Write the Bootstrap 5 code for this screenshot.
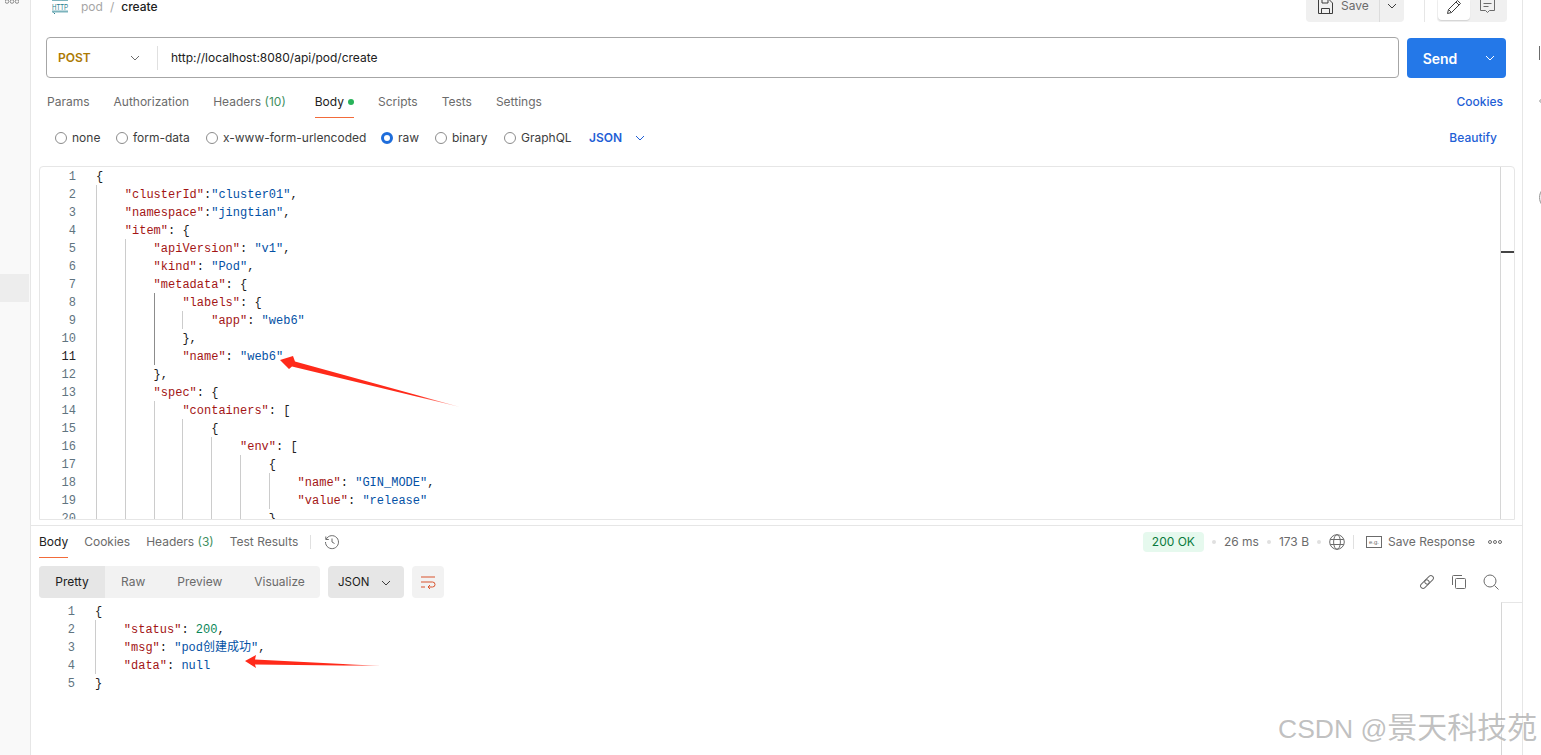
<!DOCTYPE html>
<html lang="en">
<head>
<meta charset="utf-8">
<title>pod / create</title>
<link href="https://cdn.jsdelivr.net/npm/bootstrap@5.3.0/dist/css/bootstrap.min.css" rel="stylesheet">
<style>
html,body{height:755px;overflow:hidden;background:#fff}
body{font-family:Inter,"Noto Sans",sans-serif;font-size:12px;color:#212121;position:relative}
svg{display:block;flex:none}
.ico{fill:none;stroke:#6b6b6b;stroke-width:1}
.sidebar-rail{width:31px;height:755px;background:#f9f9f9;border-right:1px solid #e6e6e6;flex:none}
.side-dots{height:4px;padding-left:5px;margin-bottom:270px;overflow:hidden}
.side-sel{height:28px;background:#ededed;margin-right:1px}
.main-col{width:1492px;height:755px;border-right:1px solid #e6e6e6;flex:none}
.right-rail{padding-left:16px;flex:1;overflow:hidden}
.pad-x{padding-left:15px;padding-right:15px}
.top-strip{height:22px;overflow:hidden}
.http-ico{margin-left:6px}
.crumb-a{color:#a6a6a6;font-size:12px;margin-left:12px;line-height:13px;align-self:flex-start}
.crumb-s{color:#a6a6a6;font-size:12px;margin:0 7px;line-height:13px;align-self:flex-start}
.crumb-b{color:#212121;font-size:12px;font-weight:500;line-height:13px;align-self:flex-start}
.save-grp{width:98px;height:22px;background:#f0f0f0;border-radius:0 0 4px 4px;color:#6b6b6b}
.save-main{width:74px;padding:0 0 10px 12px;gap:8px;border-right:1px solid #dcdcdc;height:22px;line-height:12px}
.save-arrow{flex:1;padding-bottom:10px;height:22px}
.top-div{width:1px;height:22px;background:#e6e6e6;margin:0 12px 0 20px}
.mode-grp{width:70px;height:22px;background:#f0f0f0;border-radius:0 0 4px 4px}
.mode-on{width:32px;height:20px;background:#fff;margin-left:1px;border-radius:0 0 4px 4px;padding-bottom:7px;box-shadow:0 1px 1px rgba(0,0,0,.12)}
.mode-off{flex:1;padding:0 2px 10px 0;height:22px}
.url-row{margin-top:15px;height:41px;gap:8px}
.url-box{width:1353px;height:41px;border:1px solid #a6a6a6;border-radius:4px}
.method{width:110px;padding:1px 0 0 11px;color:#ad7a03;font-weight:600;font-size:12px}
.method svg{margin-left:auto;margin-right:17px}
.url-sep{width:1px;height:24px;background:#e0e0e0}
.url-text{padding-left:13px;font-size:12px;color:#212121;border:0;flex:1;outline:0;background:none}
.send-grp{width:100px;height:40px;margin-top:1px}
.send-grp>.btn{background:#2478e8;border:0;color:#fff;border-radius:4px;padding:0;font-size:14px;font-weight:600}
.send-grp>.send-a{flex:none;width:67px;border-right:1px solid #1d66c9;border-radius:4px 0 0 4px}
.send-grp>.send-b{flex:none;width:33px;border-radius:0 4px 4px 0;margin-left:0}
.req-tabs{margin-top:9px;padding:0 4px 0 1px;height:31px;gap:24px}
.req-tabs .nav-link,.res-tabs .nav-link{padding:0;color:#6b6b6b;line-height:30px;height:31px;font-size:12px;border-bottom:1px solid transparent}
.req-tabs .nav-link.on,.res-tabs .nav-link.on{color:#212121;border-bottom-color:#f26b3a}
.req-tabs .nav-link.link-blue{color:#1f5fd6;font-weight:500}
.tab-gap{margin-left:5px}
.count{color:#3f8f5f}
.green-dot{display:inline-block;width:6px;height:6px;border-radius:50%;background:#28b35a;margin-left:4px;vertical-align:1px}
.link-blue{color:#1f5fd6;font-weight:500;font-size:12px;text-decoration:none}
.opt-row{height:40px;padding-left:9px}
.opt-row .form-check{margin:0;padding:0;min-height:0;display:flex;align-items:center;gap:5px;color:#3d3d3d}
.opt-row .form-check-input{width:12px;height:12px;margin:0;float:none;border:1px solid #8c8c8c;background-color:#fff;flex:none}
.opt-row .form-check-input:checked{background-color:#fff;border:3.5px solid #1e6ddb;background-image:none}
.opt-row .form-check-label{font-size:12px}
.w-none{width:61px}.w-form{width:90px}.w-url{width:175px}.w-raw{width:54px}.w-bin{width:69px}.w-gql{width:85px}
.json-pick{color:#1f5fd6;font-weight:600;gap:13px}
.beautify-link{margin-right:10px}
.editor{margin:8px 7px 5px 8px;height:354px;border:1px solid #e6e6e6;border-radius:4px 4px 0 0}
.ed-main{flex:1;overflow:hidden;height:352px}
.ed-bar{width:14px;border-left:1px solid #d6d6d6;position:relative}
.ed-tick{margin-top:84px;height:2px;background:#444}
.cl{height:18px;line-height:20px;font-family:"Liberation Mono",monospace;font-size:12px;white-space:pre;display:flex;color:#212121}
.cj{font-family:"Liberation Mono","Noto Sans CJK SC",monospace}
.ln{width:36px;text-align:right;margin-right:20px;color:#5f7480;flex:none}
.ln.act{color:#212121}
.gd{display:inline-block;width:28.8px;height:18px;border-left:1px solid #ccc;flex:none}
.gd.dk{border-left-color:#8c8c8c}
.k{color:#a31515}.s{color:#0451a5}.n{color:#098658}.p{color:#212121}
.res-panel{border-top:1px solid #e6e6e6;height:230px;position:relative}
.res-head{height:32px;padding:0 20px 0 8px}
.res-tabs{gap:16px;height:32px}
.res-tabs .nav-link{height:32px;line-height:31px}
.tab-sep{width:1px;height:14px;background:#e0e0e0;margin:0 13px 0 12px}
.tab-sep-r{margin:0 12px 0 8px}
.status-pill{width:61px;height:20px;background:#e6f9ee;color:#0a7a3d;border-radius:4px;font-size:12px;font-weight:400;padding:0;line-height:20px;text-align:center}
.dot-s{width:4px;height:4px;background:#e0e0e0;border-radius:50%;margin:0 8px}
.meta{color:#6b6b6b;white-space:nowrap}
.save-res{margin-left:6px;margin-right:13px}
.res-tools{height:32px;margin-top:8px;padding:0 23px 0 8px}
.seg{width:281px;height:32px;background:#f2f2f2;border-radius:4px;color:#6b6b6b;overflow:hidden}
.seg-on{width:66px;height:32px;background:#e6e6e6;color:#212121;text-align:center;line-height:32px}
.seg-it{line-height:32px;margin-left:32px}
.seg-on + .seg-it{margin-left:16px}
.fmt-pick{width:76px;height:32px;background:#e6e6e6;border-radius:4px;margin-left:8px;padding:1px 13px 0 10px;color:#212121;font-size:11.5px}
.wrap-btn{width:32px;height:32px;background:#f2f2f2;border-radius:4px;margin-left:8px}
.tool-ico{gap:16px}
.res-code{margin:4px 0 0 8px;height:153px;position:relative}
.res-bar{width:21px;border-left:1px solid #d6d6d6;border-top:1px solid #e6e6e6;height:153px;flex:none}
.rail-a{margin-top:46px}.rail-b{margin-top:38px}.rail-c{margin-top:87px}
.overlay{position:absolute;left:0;top:0;pointer-events:none}
.wmark{position:absolute;left:1278px;top:708px;font-family:"Liberation Sans","Noto Sans CJK SC",sans-serif;font-size:26.5px;line-height:40px;color:rgba(140,140,140,.55);text-shadow:1px 1px 1px rgba(255,255,255,.8);white-space:nowrap}
.wmark span{font-size:30px}
</style>
</head>
<body>
<div class="d-flex">
  <aside class="sidebar-rail">
    <div class="side-dots"><svg width="14" height="4" viewBox="0 0 14 4" fill="none" stroke="#8c8c8c"><circle cx="2" cy="1.5" r="1.8"/><circle cx="7" cy="1.5" r="1.8"/><circle cx="12" cy="1.5" r="1.8"/></svg></div>
    <div class="side-sel"></div>
  </aside>

  <main class="main-col">
    <div class="top-strip pad-x d-flex align-items-start">
      <svg class="http-ico" width="17" height="15" viewBox="0 0 17 15"><rect x="0" y="-1" width="16" height="2" fill="#7db4bd"/><text x="0" y="9.5" font-family="Liberation Sans" font-size="9" textLength="16" lengthAdjust="spacingAndGlyphs" fill="#2a7f8e">HTTP</text><rect x="0" y="10.5" width="16" height="2" fill="#7db4bd"/><path d="M1.5 12.5l1.5 1.5" stroke="#2a7f8e" fill="none"/></svg>
      <span class="crumb-a">pod</span><span class="crumb-s">/</span><span class="crumb-b">create</span>
      <div class="ms-auto d-flex">
        <div class="save-grp d-flex">
          <div class="save-main d-flex align-items-center">
            <svg width="15" height="15" viewBox="0 0 15 15" fill="none" stroke="#3d3d3d"><path d="M.5.5h10.5l3.5 3.5v10.5h-14z"/><path d="M3.5 14.5v-5h8v5M4 .5v3.5h6v-3.5"/></svg>
            <span>Save</span>
          </div>
          <div class="save-arrow d-flex align-items-center justify-content-center"><svg width="10" height="6" viewBox="0 0 10 6" fill="none" stroke="#3d3d3d"><path d="M1 1l4 4 4-4"/></svg></div>
        </div>
        <div class="top-div"></div>
        <div class="mode-grp d-flex">
          <div class="mode-on d-flex align-items-center justify-content-center"><svg width="16" height="16" viewBox="0 0 16 16" fill="none" stroke="#3d3d3d"><path d="M1.5 14.5l1-4L11.5 1.5l3 3-9 9z"/><path d="M2.5 10.5l3 3M10 3l3 3"/></svg></div>
          <div class="mode-off d-flex align-items-center justify-content-center"><svg width="15" height="15" viewBox="0 0 15 15" fill="none" stroke="#6b6b6b"><path d="M.5.5h14v11h-5l-2 2-2-2h-5z"/><path d="M3.5 4.5h8M3.5 7.5h5"/></svg></div>
        </div>
      </div>
    </div>

    <div class="pad-x">
      <div class="url-row d-flex">
        <div class="url-box d-flex align-items-center">
          <div class="method d-flex align-items-center">POST<svg width="10" height="6" viewBox="0 0 10 6" fill="none" stroke="#6b6b6b"><path d="M1 1l4 4 4-4"/></svg></div>
          <div class="url-sep"></div>
          <input class="url-text" type="text" value="http://localhost:8080/api/pod/create" aria-label="URL">
        </div>
        <div class="btn-group send-grp" role="group">
          <button type="button" class="btn send-a">Send</button>
          <button type="button" class="btn send-b d-flex align-items-center justify-content-center" aria-label="More"><svg width="10" height="6" viewBox="0 0 10 6" fill="none" stroke="#fff"><path d="M1 1l4 4 4-4"/></svg></button>
        </div>
      </div>

      <ul class="nav req-tabs">
        <li class="nav-item"><a class="nav-link" href="#">Params</a></li>
        <li class="nav-item"><a class="nav-link" href="#">Authorization</a></li>
        <li class="nav-item"><a class="nav-link" href="#">Headers <span class="count">(10)</span></a></li>
        <li class="nav-item tab-gap"><a class="nav-link on" href="#">Body<span class="green-dot"></span></a></li>
        <li class="nav-item"><a class="nav-link" href="#">Scripts</a></li>
        <li class="nav-item"><a class="nav-link" href="#">Tests</a></li>
        <li class="nav-item"><a class="nav-link" href="#">Settings</a></li>
        <li class="nav-item ms-auto"><a class="nav-link link-blue" href="#">Cookies</a></li>
      </ul>

      <div class="opt-row d-flex align-items-center">
        <div class="form-check w-none"><input class="form-check-input" type="radio" name="bt" id="r1"><label class="form-check-label" for="r1">none</label></div>
        <div class="form-check w-form"><input class="form-check-input" type="radio" name="bt" id="r2"><label class="form-check-label" for="r2">form-data</label></div>
        <div class="form-check w-url"><input class="form-check-input" type="radio" name="bt" id="r3"><label class="form-check-label" for="r3">x-www-form-urlencoded</label></div>
        <div class="form-check w-raw"><input class="form-check-input" type="radio" name="bt" id="r4" checked><label class="form-check-label" for="r4">raw</label></div>
        <div class="form-check w-bin"><input class="form-check-input" type="radio" name="bt" id="r5"><label class="form-check-label" for="r5">binary</label></div>
        <div class="form-check w-gql"><input class="form-check-input" type="radio" name="bt" id="r6"><label class="form-check-label" for="r6">GraphQL</label></div>
        <div class="json-pick d-flex align-items-center">JSON<svg width="10" height="6" viewBox="0 0 10 6" fill="none" stroke="#1f5fd6"><path d="M1 1l4 4 4-4"/></svg></div>
        <a class="link-blue ms-auto beautify-link" href="#">Beautify</a>
      </div>
    </div>

    <div class="editor d-flex">
      <div class="ed-main">
        <div class="cl"><span class="ln">1</span><span class="p">{</span></div>
        <div class="cl"><span class="ln">2</span><i class="gd"></i><span class="k">"clusterId"</span><span class="p">:</span><span class="s">"cluster01"</span><span class="p">,</span></div>
        <div class="cl"><span class="ln">3</span><i class="gd"></i><span class="k">"namespace"</span><span class="p">:</span><span class="s">"jingtian"</span><span class="p">,</span></div>
        <div class="cl"><span class="ln">4</span><i class="gd"></i><span class="k">"item"</span><span class="p">: {</span></div>
        <div class="cl"><span class="ln">5</span><i class="gd"></i><i class="gd"></i><span class="k">"apiVersion"</span><span class="p">: </span><span class="s">"v1"</span><span class="p">,</span></div>
        <div class="cl"><span class="ln">6</span><i class="gd"></i><i class="gd"></i><span class="k">"kind"</span><span class="p">: </span><span class="s">"Pod"</span><span class="p">,</span></div>
        <div class="cl"><span class="ln">7</span><i class="gd"></i><i class="gd"></i><span class="k">"metadata"</span><span class="p">: {</span></div>
        <div class="cl"><span class="ln">8</span><i class="gd"></i><i class="gd"></i><i class="gd dk"></i><span class="k">"labels"</span><span class="p">: {</span></div>
        <div class="cl"><span class="ln">9</span><i class="gd"></i><i class="gd"></i><i class="gd dk"></i><i class="gd"></i><span class="k">"app"</span><span class="p">: </span><span class="s">"web6"</span></div>
        <div class="cl"><span class="ln">10</span><i class="gd"></i><i class="gd"></i><i class="gd dk"></i><span class="p">},</span></div>
        <div class="cl"><span class="ln act">11</span><i class="gd"></i><i class="gd"></i><i class="gd dk"></i><span class="k">"name"</span><span class="p">: </span><span class="s">"web6"</span></div>
        <div class="cl"><span class="ln">12</span><i class="gd"></i><i class="gd"></i><span class="p">},</span></div>
        <div class="cl"><span class="ln">13</span><i class="gd"></i><i class="gd"></i><span class="k">"spec"</span><span class="p">: {</span></div>
        <div class="cl"><span class="ln">14</span><i class="gd"></i><i class="gd"></i><i class="gd"></i><span class="k">"containers"</span><span class="p">: [</span></div>
        <div class="cl"><span class="ln">15</span><i class="gd"></i><i class="gd"></i><i class="gd"></i><i class="gd"></i><span class="p">{</span></div>
        <div class="cl"><span class="ln">16</span><i class="gd"></i><i class="gd"></i><i class="gd"></i><i class="gd"></i><i class="gd"></i><span class="k">"env"</span><span class="p">: [</span></div>
        <div class="cl"><span class="ln">17</span><i class="gd"></i><i class="gd"></i><i class="gd"></i><i class="gd"></i><i class="gd"></i><i class="gd"></i><span class="p">{</span></div>
        <div class="cl"><span class="ln">18</span><i class="gd"></i><i class="gd"></i><i class="gd"></i><i class="gd"></i><i class="gd"></i><i class="gd"></i><i class="gd"></i><span class="k">"name"</span><span class="p">: </span><span class="s">"GIN_MODE"</span><span class="p">,</span></div>
        <div class="cl"><span class="ln">19</span><i class="gd"></i><i class="gd"></i><i class="gd"></i><i class="gd"></i><i class="gd"></i><i class="gd"></i><i class="gd"></i><span class="k">"value"</span><span class="p">: </span><span class="s">"release"</span></div>
        <div class="cl"><span class="ln">20</span><i class="gd"></i><i class="gd"></i><i class="gd"></i><i class="gd"></i><i class="gd"></i><i class="gd"></i><span class="p">}</span></div>
      </div>
      <div class="ed-bar"><div class="ed-tick"></div></div>
    </div>

    <section class="res-panel">
      <div class="res-head d-flex align-items-center">
        <ul class="nav res-tabs">
          <li class="nav-item"><a class="nav-link on" href="#">Body</a></li>
          <li class="nav-item"><a class="nav-link" href="#">Cookies</a></li>
          <li class="nav-item"><a class="nav-link" href="#">Headers <span class="count">(3)</span></a></li>
          <li class="nav-item"><a class="nav-link" href="#">Test Results</a></li>
        </ul>
        <div class="tab-sep"></div>
        <svg width="16" height="16" viewBox="0 0 16 16" class="ico"><path d="M2.2 5.2A6.5 6.5 0 1 1 1.5 8"/><path d="M1.8 2.5v3h3"/><path d="M8 4.5V8l2.5 1.5"/></svg>
        <div class="ms-auto d-flex align-items-center meta">
          <span class="badge status-pill">200 OK</span>
          <span class="dot-s"></span><span>26 ms</span>
          <span class="dot-s"></span><span>173 B</span>
          <span class="dot-s"></span>
          <svg width="16" height="16" viewBox="0 0 16 16" class="ico"><circle cx="8" cy="8" r="7.3"/><ellipse cx="8" cy="8" rx="3.4" ry="7.3"/><path d="M1.2 5.5h13.6M1.2 10.5h13.6"/></svg>
          <div class="tab-sep tab-sep-r"></div>
          <svg width="16" height="12" viewBox="0 0 16 12" class="ico"><rect x=".5" y=".5" width="15" height="11"/><text x="8" y="8" text-anchor="middle" font-family="Liberation Sans" font-size="6" fill="#6b6b6b" stroke="none">e.g.</text></svg>
          <span class="save-res">Save Response</span>
          <svg class="ico" width="14" height="4" viewBox="0 0 14 4"><circle cx="2" cy="2" r="1.5"/><circle cx="7" cy="2" r="1.5"/><circle cx="12" cy="2" r="1.5"/></svg>
        </div>
      </div>

      <div class="res-tools d-flex align-items-center">
        <div class="seg d-flex">
          <div class="seg-on">Pretty</div>
          <div class="seg-it">Raw</div>
          <div class="seg-it">Preview</div>
          <div class="seg-it">Visualize</div>
        </div>
        <div class="fmt-pick d-flex align-items-center justify-content-between">JSON<svg width="10" height="6" viewBox="0 0 10 6" fill="none" stroke="#3d3d3d"><path d="M1 1l4 4 4-4"/></svg></div>
        <div class="wrap-btn d-flex align-items-center justify-content-center"><svg width="16" height="16" viewBox="0 0 16 16" fill="none" stroke="#d9532c"><path d="M1 3h14M1 8h11.5a2.5 2.5 0 0 1 0 5H8M10 11l-2 2 2 2M1 13h4"/></svg></div>
        <div class="ms-auto d-flex tool-ico">
          <svg width="16" height="16" viewBox="0 0 16 16" class="ico"><g transform="rotate(-45 8 8)"><rect x="0" y="5.5" width="10" height="5" rx="2.5"/><rect x="6" y="5.5" width="10" height="5" rx="2.5"/></g></svg>
          <svg width="16" height="16" viewBox="0 0 16 16" class="ico"><rect x="4.5" y="4.5" width="10" height="10" rx="1"/><path d="M11 1.5H2.5a1 1 0 0 0-1 1V11"/></svg>
          <svg width="16" height="16" viewBox="0 0 16 16" class="ico"><circle cx="7" cy="7" r="6"/><path d="M11.5 11.5l4 4"/></svg>
        </div>
      </div>

      <div class="res-code d-flex">
        <div class="flex-grow-1">
          <div class="cl"><span class="ln">1</span><span class="p">{</span></div>
          <div class="cl"><span class="ln">2</span><i class="gd"></i><span class="k">"status"</span><span class="p">: </span><span class="n">200</span><span class="p">,</span></div>
          <div class="cl cj"><span class="ln">3</span><i class="gd"></i><span class="k">"msg"</span><span class="p">: </span><span class="s">"pod创建成功"</span><span class="p">,</span></div>
          <div class="cl"><span class="ln">4</span><i class="gd"></i><span class="k">"data"</span><span class="p">: </span><span class="s">null</span></div>
          <div class="cl"><span class="ln">5</span><span class="p">}</span></div>
        </div>
        <div class="res-bar"></div>
      </div>
    </section>
  </main>

  <aside class="right-rail">
    <svg class="rail-a" width="3" height="14" viewBox="0 0 3 14" fill="none" stroke="#6b6b6b"><path d="M.5 0v14"/></svg>
    <svg class="rail-b" width="3" height="6" viewBox="0 0 3 6" fill="none" stroke="#8c8c8c"><path d="M3 .5L.5 3 3 5.5"/></svg>
    <svg class="rail-c" width="3" height="13" viewBox="0 0 3 13" fill="none" stroke="#8c8c8c"><path d="M2.5 0C0 3 0 10 2.5 13"/></svg>
  </aside>
</div>

<svg class="overlay" width="1541" height="755" viewBox="0 0 1541 755">
  <defs>
    <linearGradient id="fa" x1="290" y1="363" x2="460" y2="407" gradientUnits="userSpaceOnUse"><stop offset="0" stop-color="#ff2a1a"/><stop offset=".75" stop-color="#ff2a1a"/><stop offset="1" stop-color="#ff2a1a" stop-opacity=".3"/></linearGradient>
    <linearGradient id="fb" x1="255" y1="662" x2="382" y2="666" gradientUnits="userSpaceOnUse"><stop offset="0" stop-color="#ff2a1a"/><stop offset=".7" stop-color="#ff2a1a"/><stop offset="1" stop-color="#ff2a1a" stop-opacity=".3"/></linearGradient>
  </defs>
  <polygon points="280,360 293,356 295,361.5 460,407 292,366.5 289,369" fill="url(#fa)"/>
  <polygon points="245,661 256,655 255,659.5 382,666 255,664.5 256,668" fill="url(#fb)"/>
</svg>
<div class="wmark">CSDN @<span>景天科技苑</span></div>
<script src="https://cdn.jsdelivr.net/npm/bootstrap@5.3.0/dist/js/bootstrap.bundle.min.js"></script>
</body>
</html>
